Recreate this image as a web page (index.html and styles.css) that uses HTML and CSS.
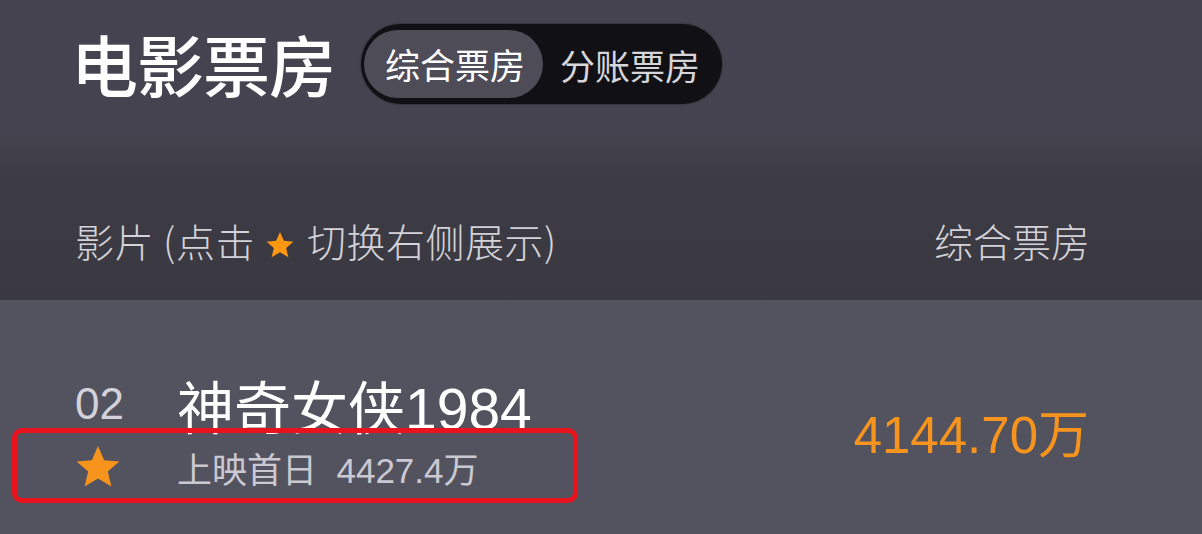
FILE: index.html
```html
<!DOCTYPE html>
<html lang="zh-CN">
<head>
    <meta charset="UTF-8">
    <meta name="viewport" content="width=device-width, initial-scale=1.0">
    <title>电影票房</title>
    <link rel="stylesheet" href="styles.css">
</head>
<body>

<div class="page">
    <div class="top">
        <h1>电影票房</h1>
        <div class="switch">
            <span class="tab active">综合票房</span>
            <span class="tab">分账票房</span>
        </div>
    </div>

    <div class="thead">
        <span class="col-film">影片 (点击<svg class="star-sm" viewBox="0 0 24 24"><path d="M12 1.5l3.1 7.1 7.6.7-5.8 5 1.8 7.5L12 17.8l-6.7 4 1.8-7.5-5.8-5 7.6-.7z"/></svg>切换右侧展示)</span>
        <span class="col-box">综合票房</span>
    </div>

    <div class="row">
        <div class="row-main">
            <div class="line">
                <span class="rank">02</span>
                <span class="name">神奇女侠1984</span>
            </div>
            <div class="line sub">
                <span class="rank"><svg class="star" viewBox="0 0 24 24"><path d="M12 1.5l3.1 7.1 7.6.7-5.8 5 1.8 7.5L12 17.8l-6.7 4 1.8-7.5-5.8-5 7.6-.7z"/></svg></span>
                <span class="first-day">上映首日&nbsp;&nbsp;4427.4万</span>
            </div>
        </div>
        <div class="amount">4144.70万</div>
        <div class="mark"></div>
    </div>
</div>

</body>
</html>
```

FILE: styles.css
```css
body {
    margin: 0;
    padding: 0;
    background: #53525f;
    font-family: 'Liberation Sans', 'Noto Sans CJK SC', sans-serif;
    color: #fff;
}
.page {
    width: 1202px;
    height: 534px;
    overflow: hidden;
}
.top {
    height: 128px;
    box-sizing: border-box;
    padding: 24px 0 0 71px;
    display: flex;
    align-items: flex-start;
    gap: 26px;
    background: #45434f;
}
h1 {
    margin: 0;
    height: 80px;
    line-height: 78px;
    font-size: 67px;
    font-weight: 500;
    font-family: 'Noto Sans CJK SC', sans-serif;
    letter-spacing: -1px;
}
.switch {
    display: flex;
    align-items: center;
    height: 80px;
    box-sizing: border-box;
    padding: 0 22px 0 3px;
    background: #111014;
    border-radius: 40px;
    box-shadow: 0 0 2px rgba(0, 0, 0, 0.6);
    gap: 17px;
}
.tab {
    font-family: 'Noto Sans CJK SC', sans-serif;
    font-size: 35px;
    color: #d6d5da;
}
.tab.active {
    height: 68px;
    line-height: 68px;
    padding: 0 18px 0 21px;
    border-radius: 34px;
    background: #4e4c57;
    color: #fff;
}
.thead {
    height: 172px;
    box-sizing: border-box;
    padding: 0 112px 40px 75px;
    display: flex;
    justify-content: space-between;
    align-items: flex-end;
    background: linear-gradient(#45434f 0, #3d3c45 50px, #3a3942 100%);
    font-family: 'Noto Sans CJK SC', sans-serif;
    font-size: 39px;
    line-height: 40px;
    color: #d3d2d8;
    font-weight: 300;
}
.col-film {
    letter-spacing: 0.5px;
}
.star-sm {
    width: 30px;
    height: 30px;
    margin: 0 12px 0 10px;
    fill: #ff9711;
    vertical-align: -3px;
}
.row {
    position: relative;
    display: flex;
    justify-content: space-between;
    align-items: center;
    padding: 74px 113px 0 75px;
}
.line {
    display: flex;
    align-items: center;
    height: 60px;
}
.line.sub {
    height: 40px;
    margin-top: 13px;
}
.rank {
    width: 102px;
    font-size: 44px;
    color: #d3d2da;
    line-height: 60px;
}
.name {
    font-size: 57px;
    color: #fff;
}
.star {
    width: 48px;
    height: 48px;
    fill: #f7941d;
    vertical-align: middle;
    margin-left: -1px;
}
.sub .rank {
    line-height: 40px;
    display: flex;
    align-items: center;
}
.first-day {
    font-size: 35px;
    color: #cac9d1;
}
.amount {
    font-size: 51px;
    color: #f7941d;
}
.mark {
    position: absolute;
    left: 12px;
    top: 128px;
    width: 566px;
    height: 75px;
    box-sizing: border-box;
    border: 5px solid #e8131c;
    border-radius: 10px;
}
```
